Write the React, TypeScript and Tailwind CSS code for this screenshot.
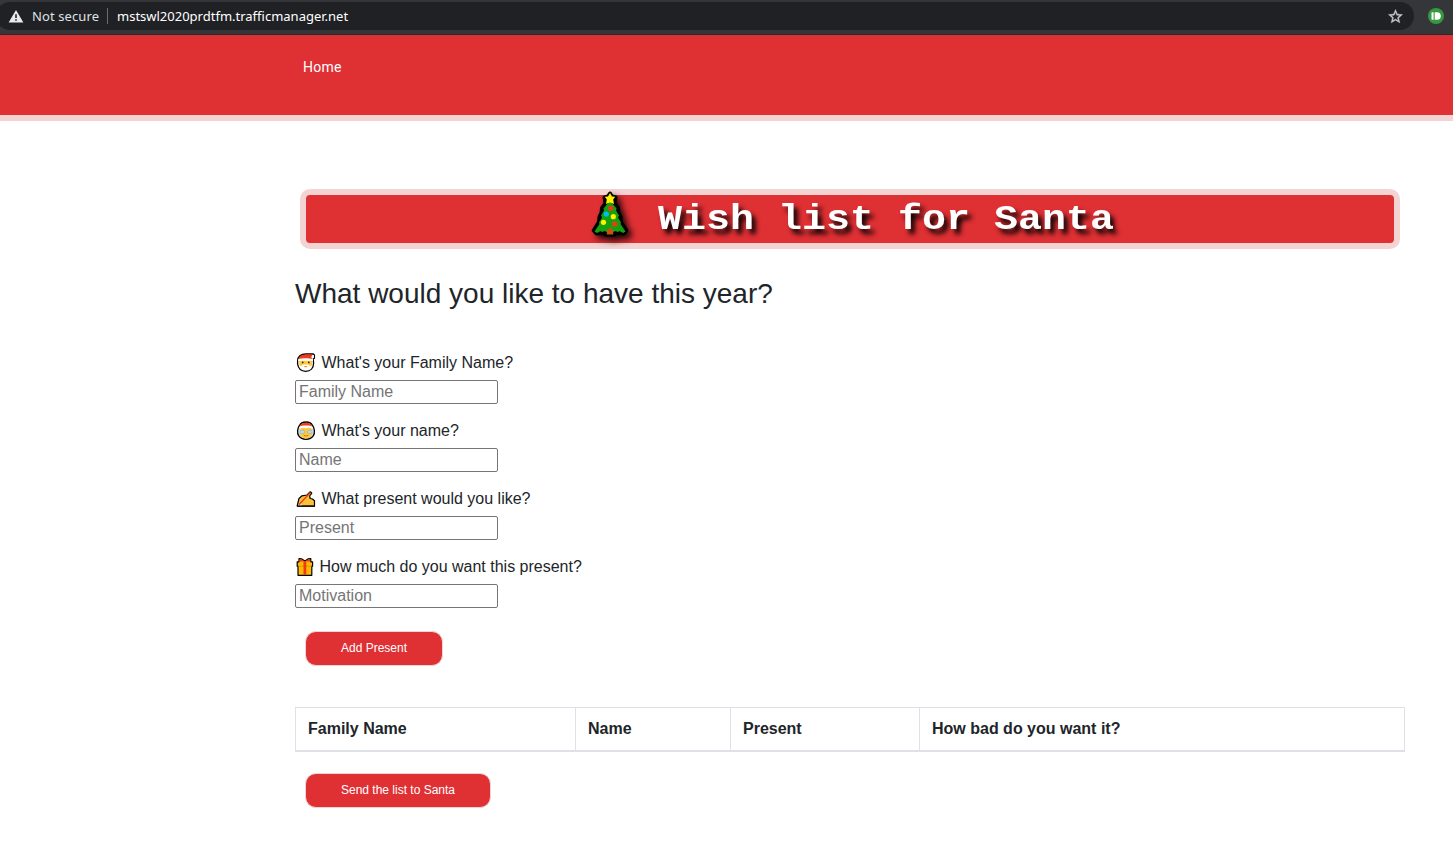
import type { ReactNode } from "react";

function TreeIcon() {
  return (
    <svg viewBox="0 0 48 48" className="h-[48px] w-[48px] overflow-visible [filter:drop-shadow(4px_4px_3px_rgba(0,0,0,0.85))]">
      <path
        d="M24 -1.5 L26 1.5 L29.5 2.5 L28.5 8.5 L32 13 L32.5 18 L34.5 22 L35 27 L40.3 35.5 L37.5 38.5 L31 38 L28.5 39.7 H19.5 L17 38 L10.5 38.5 L7.7 35.5 L13 27 L13.5 22 L15.5 18 L16 13 L19.5 8.5 L18.5 2.5 L22 1.5 Z"
        fill="#000"
        stroke="#000"
        strokeWidth="4"
        strokeLinejoin="round"
      />
      <path
        d="M24 7 L27 9.2 L30.5 13.5 L30 15.5 L33 20.5 L32 22.5 L35 27.5 L34.5 29 L39.5 36.5 L37 38 L33.5 36 L32 37 L29 36 L27.5 37 H20.5 L19 36 L16 37 L14.5 36 L11 38 L8.5 36.5 L13.5 29 L13 27.5 L16 22.5 L15 20.5 L18 15.5 L17.5 13.5 L21 9.2 Z"
        fill="#16a010"
      />
      <path d="M20.8 39.5 V35.5 L22.5 33.5 H25.5 L27.2 35.5 V39.5 Z" fill="#ca5010" />
      <path d="M24 -2 L26 1.4 L29.2 1.8 L27.2 4.6 L28 9 L24 7.5 L20 9 L20.8 4.6 L18.8 1.8 L22 1.4 Z" fill="#fff100" />
      <circle cx="24.7" cy="13.3" r="2.6" fill="#f03a17" />
      <circle cx="20.3" cy="19" r="2.6" fill="#00bcf2" />
      <circle cx="27.3" cy="21.7" r="2.6" fill="#fff100" />
      <circle cx="17.5" cy="27.3" r="2.6" fill="#fff100" />
      <circle cx="28.8" cy="29" r="2.6" fill="#f03a17" />
    </svg>
  );
}

function SantaIcon() {
  return (
    <svg viewBox="0 0 22 22" className="h-[22px] w-[22px]">
      <path d="M2.6 9 C2.8 4.5 6 2.1 11 2 H18.3 L19.4 3 V6.3 L18.2 7 L18.6 11 C18.6 16 15.5 19.3 10.7 19.3 C6 19.3 3.2 16 2.6 12 Z" fill="#fff" stroke="#000" strokeWidth="1.3" strokeLinejoin="round" />
      <path d="M4.2 8.8 H17.2 V13.2 C15 14.6 6.5 14.6 4.4 13.2 Z" fill="#ffc83d" />
      <path d="M3.4 7.4 C4.2 3.8 7 2.7 11 2.6 H17.3 V4.4 H16 L17.6 7.4 Z" fill="#f03a17" />
      <path d="M3.2 7.3 C7 6 14 6 18 7.3 V8.9 C14 8.1 8 8.1 3.2 8.9 Z" fill="#fff" />
      <rect x="17.3" y="3" width="1.6" height="2.8" rx=".6" fill="#fff" />
      <circle cx="7.7" cy="10.4" r=".85" fill="#222" />
      <circle cx="13.8" cy="10.4" r=".85" fill="#222" />
      <path d="M6.6 14 C8 12.4 9.6 12.3 10.7 13 C11.8 12.3 13.4 12.4 14.8 14 C13 15 8.6 15 6.6 14 Z" fill="#fff" />
      <path d="M9.3 14.6 H12.2" stroke="#f07a17" strokeWidth="1" />
    </svg>
  );
}

function MrsClausIcon() {
  return (
    <svg viewBox="0 0 22 22" className="h-[22px] w-[22px]">
      <path d="M11 2 C14.2 2 16.6 3.2 17.5 5.5 C19.8 8 20 13.2 18.4 15.7 C16.5 18.5 14 19.3 11 19.3 C8 19.3 5.5 18.5 3.6 15.7 C2 13.2 2.2 8 4.5 5.5 C5.4 3.2 7.8 2 11 2 Z" fill="#d2dade" stroke="#000" strokeWidth="1.3" />
      <path d="M5 8.5 C8 7 14 7 17 8.5 V14 C16 17.5 13.5 18.5 11 18.5 C8.5 18.5 6 17.5 5 14 Z" fill="#ffc83d" />
      <path d="M4.8 6.7 C6 3.6 8 2.7 11 2.7 C14 2.7 16 3.6 17.2 6.7 Z" fill="#f03a17" />
      <path d="M4.2 6.9 C7 5 15 5 17.8 6.9 L17.2 8.7 L14 7.6 L11 8.2 L8 7.6 L4.8 8.7 Z" fill="#fff" />
      <rect x="5" y="10.3" width="4.6" height="3.2" rx="1.4" fill="#b8dce8" stroke="#7fa9b8" strokeWidth=".5" />
      <rect x="12.4" y="10.3" width="4.6" height="3.2" rx="1.4" fill="#b8dce8" stroke="#7fa9b8" strokeWidth=".5" />
      <path d="M8.7 15.2 Q11 17.2 13.3 15.2" fill="none" stroke="#b06a10" strokeWidth=".8" />
    </svg>
  );
}

function WritingIcon() {
  return (
    <svg viewBox="0 0 22 22" className="h-[22px] w-[22px]">
      <path d="M2.2 18 L3 14.5 L4 10.5 L7 7.8 L12 7 L15.3 3.8 L16.8 5.2 L14.6 8 L15.2 10.5 L17.5 11 L19.5 12.8 V18 Z" fill="#fcbf38" stroke="#000" strokeWidth="1.2" strokeLinejoin="round" />
      <path d="M3 17.5 L4.8 14.8 L7.6 17.5 Z" fill="#ddd" />
      <path d="M3.8 16.7 L15.4 4.6" stroke="#e8401a" strokeWidth="1.4" />
      <path d="M2 18.2 H20" stroke="#000" strokeWidth="1.2" />
    </svg>
  );
}

function GiftIcon() {
  return (
    <svg viewBox="0 0 20 22" className="h-[22px] w-[20px]">
      <path d="M2.2 5.8 H4 V2.6 L6.8 2.9 L9.9 5 L13 2.9 L15.8 2.6 V5.8 H17.6 V10.2 H16.8 V19.3 H3 V10.2 H2.2 Z" fill="#ffb900" stroke="#000" strokeWidth="1.2" strokeLinejoin="round" />
      <path d="M4.7 5.6 V3.3 L6.8 3.6 L9.9 5.7 L13 3.6 L15.1 3.3 V5.6 Z" fill="#f03a17" />
      <path d="M3.2 10.2 H16.6" stroke="#d98600" strokeWidth=".8" />
      <rect x="8.5" y="5.6" width="2.8" height="13.1" fill="#f03a17" />
    </svg>
  );
}

function Field({ icon, label, placeholder }: { icon: ReactNode; label: string; placeholder: string }) {
  return (
    <div className="h-[68px]">
      <label className="flex h-[24px] items-center whitespace-nowrap">
        {icon}
        <span className="ml-[4.5px]">{label}</span>
      </label>
      <input
        placeholder={placeholder}
        className="mt-[5px] block h-[24px] w-[203px] rounded-[2px] border border-[#767676] bg-white px-[3px] pb-px text-[16px] leading-[20px] placeholder:text-[#757575]"
      />
    </div>
  );
}

function RedButton({ children, className }: { children: ReactNode; className: string }) {
  return (
    <button className={`ml-[10px] block h-[35px] rounded-[11px] border border-[#f3d4d3] bg-[#df3034] text-[12px] leading-[15px] whitespace-nowrap text-white ${className}`}>
      {children}
    </button>
  );
}

export default function App() {
  return (
    <div className="h-[847px] w-full overflow-hidden bg-white font-['Liberation_Sans',Arial,sans-serif] text-[16px] leading-[24px] text-[#212529]">
      <div className="flex h-[35px] items-start border-b border-[#292a2d] bg-[#35363a] pt-[2px] font-['Noto_Sans','Open_Sans',sans-serif] text-[13px]">
        <div className="-ml-[4px] flex h-[28px] w-[1418px] items-center rounded-full bg-[#202124] pl-[12px]">
          <svg viewBox="0 0 16 14" className="h-[14px] w-[16px]">
            <path d="M8 1 L15.4 13.4 H.6 Z" fill="#e8eaed" />
            <path d="M7.2 5.3 H8.8 V9 H7.2 Z M7.2 10.3 H8.8 V11.8 H7.2 Z" fill="#202124" />
          </svg>
          <span className="ml-[8px] w-[68px] whitespace-nowrap tracking-[0.1px] text-[#dfe1e5]">Not secure</span>
          <span className="ml-[7px] h-[16px] w-px bg-[#6b6d70]" />
          <span className="ml-[9px] whitespace-nowrap text-white">mstswl2020prdtfm.trafficmanager.net</span>
          <svg viewBox="0 0 24 24" className="mr-[10px] ml-auto h-[17px] w-[17px]" fill="#c4c7cb" stroke="#c4c7cb" strokeWidth=".5">
            <path d="M22 9.24l-7.19-.62L12 2 9.19 8.63 2 9.24l5.46 4.73L5.82 21 12 17.27 18.18 21l-1.63-7.03L22 9.24zM12 15.4l-3.76 2.27 1-4.28-3.32-2.88 4.38-.38L12 6.1l1.71 4.04 4.38.38-3.32 2.88 1 4.28L12 15.4z" />
          </svg>
        </div>
        <svg viewBox="0 0 16 16" className="mt-[6px] ml-[14px] h-[16px] w-[16px]">
          <circle cx="8" cy="8" r="8" fill="#37993f" />
          <rect x="3.5" y="4.2" width="2.1" height="7.6" rx=".6" fill="#fff" />
          <path d="M6.7 4.2 H9 A3.8 3.8 0 0 1 9 11.8 H6.7 Z" fill="#fff" />
        </svg>
      </div>

      <nav className="h-[86px] border-b-[6px] border-[#f3d4d3] bg-[#df3034] pt-[20px] pl-[303px]">
        <a className="block font-[Roboto,sans-serif] text-[14px] leading-[24px] tracking-[0.25px] text-white">Home</a>
      </nav>

      <main className="pl-[295px]">
        <h1 className="mt-[68px] ml-[5px] flex h-[60px] w-[1100px] items-center justify-center rounded-[10px] border-[6px] border-[#f3d4d3] bg-[#df3034] font-['Liberation_Mono','Courier_New',monospace] text-[40px] leading-[48px] font-bold whitespace-pre text-white [text-shadow:4px_5px_6px_#000]">
          <TreeIcon />
          <span className="origin-[50%_35px] scale-y-[0.88]"> Wish list for Santa</span>
        </h1>

        <h2 className="mt-[28px] text-[28px] leading-[34px] whitespace-nowrap">What would you like to have this year?</h2>

        <form className="mt-[40px]">
          <Field icon={<SantaIcon />} label="What's your Family Name?" placeholder="Family Name" />
          <Field icon={<MrsClausIcon />} label="What's your name?" placeholder="Name" />
          <Field icon={<WritingIcon />} label="What present would you like?" placeholder="Present" />
          <Field icon={<GiftIcon />} label="How much do you want this present?" placeholder="Motivation" />
        </form>

        <div className="mt-[8px]">
          <RedButton className="w-[138px]">Add Present</RedButton>
        </div>

        <div className="mt-[41px] grid h-[45px] w-[1110px] grid-cols-[281px_155px_189px_485px] border-t border-b-2 border-[#dee2e6] font-bold">
          <div className="border-x border-[#dee2e6] py-[9px] pl-[12px]">Family Name</div>
          <div className="border-r border-[#dee2e6] py-[9px] pl-[12px]">Name</div>
          <div className="border-r border-[#dee2e6] py-[9px] pl-[12px]">Present</div>
          <div className="border-r border-[#dee2e6] py-[9px] pl-[12px]">How bad do you want it?</div>
        </div>

        <div className="mt-[21px]">
          <RedButton className="w-[186px]">Send the list to Santa</RedButton>
        </div>
      </main>
    </div>
  );
}
